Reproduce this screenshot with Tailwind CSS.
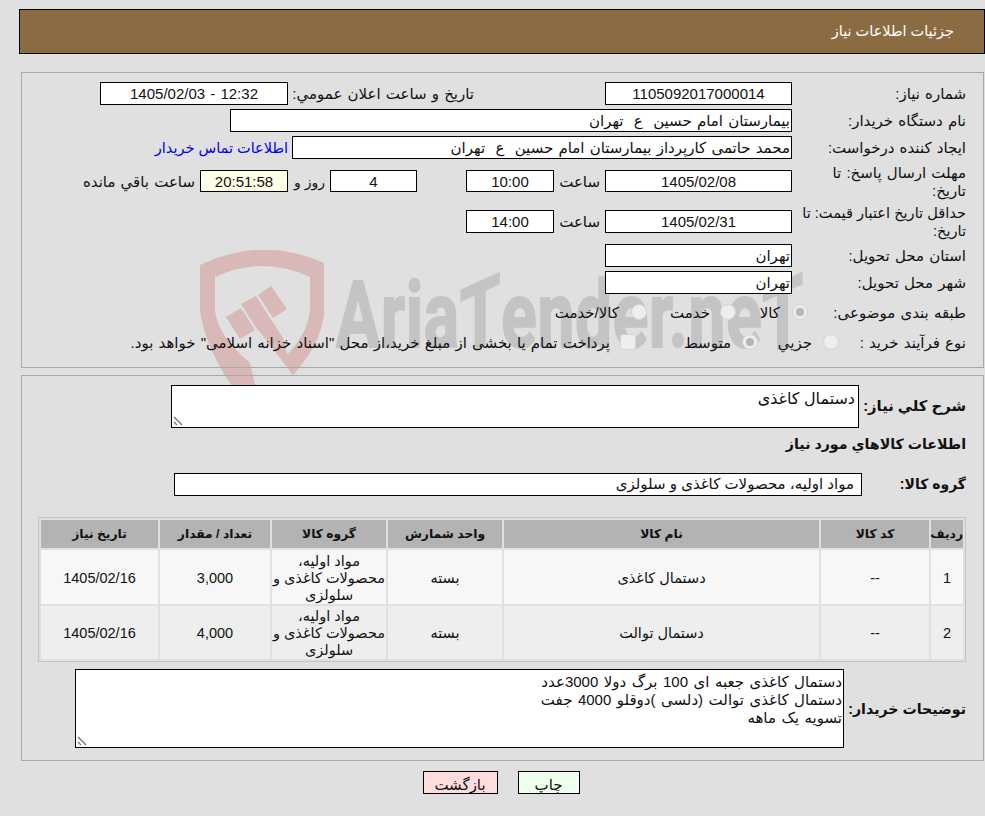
<!DOCTYPE html>
<html dir="rtl" lang="fa">
<head>
<meta charset="utf-8">
<title>جزئیات اطلاعات نیاز</title>
<script src="https://cdn.jsdelivr.net/npm/@tailwindcss/browser@4"></script>
</head>
<body class="bg-[#e0e0e0] text-[#111] text-[15px] [word-spacing:1px] font-['Liberation_Sans','DejaVu_Sans',sans-serif]">
<div class="relative w-[985px] h-[816px] overflow-hidden pt-[9px]">

  <!-- watermark -->
  <svg class="absolute left-[200px] top-[250px] w-[126px] h-[140px]" viewBox="200 250 126 140" aria-hidden="true">
    <path fill="#d9b8b8" fill-rule="evenodd" d="M200 265 Q262 235 324 263 L324 315 Q320 345 293 375 L268 338 L282 360 Q308 335 310 310 L310 277 Q262 255 215 277 L215 310 Q217 335 250 363 L256 388 L233 388 Q204 345 200 310 Z"/>
    <path fill="#d9b8b8" d="M226 317 L241 308 L255 330 L240 339 Z M241 304 L256 296 L270 318 L283 338 L293 375 L270 345 L255 326 Z M258 295 L271 286 L287 309 L273 318 Z"/>
  </svg>
  <div class="absolute left-[336px] top-[261px] text-[92px] leading-[110px] font-bold text-[#c4c4c4] [-webkit-text-stroke:2px_#c4c4c4] [word-spacing:0] whitespace-nowrap origin-left [direction:ltr] [transform:scaleX(.715)] font-['Roboto',sans-serif] tracking-[1px]" aria-hidden="true">Aria<span class="inline-block [transform:skewY(-18deg)]">T</span>ender.ne<span class="inline-block [transform:skewY(-18deg)]">T</span></div>

  <div class="relative">
    <header class="ml-[19px] mr-0 h-[45px] bg-[#8b6c42] border border-black flex items-center pr-[30px] text-white text-[14.5px] [word-spacing:0]">جزئیات اطلاعات نیاز</header>

    <!-- panel 1 -->
    <section class="mt-[18px] ml-[21px] mr-[1px] h-[296px] border border-[#a8a8a8] pr-[17px] pt-[9px]">
      <div class="flex items-center h-[23px]">
        <label class="w-[174px] pt-[2px]">شماره نیاز:</label>
        <div class="w-[187px] h-[23px] pt-[2px] border border-black bg-white flex items-center justify-center">1105092017000014</div>
        <label class="mr-[131px] w-[186px] pt-[2px]">تاريخ و ساعت اعلان عمومي:</label>
        <div class="w-[188px] h-[23px] pt-[2px] border border-black bg-white flex items-center justify-center">12:32 - 1405/02/03</div>
      </div>
      <div class="flex items-center h-[23px] mt-[4px]">
        <label class="w-[174px] pt-[2px]">نام دستگاه خريدار:</label>
        <div class="w-[562px] h-[23px] pt-[2px] border border-black bg-white flex items-center px-[1px]">بیمارستان امام حسین&nbsp; ع&nbsp; تهران</div>
      </div>
      <div class="flex items-center h-[23px] mt-[4px]">
        <label class="w-[174px] pt-[2px]">ایجاد کننده درخواست:</label>
        <div class="w-[500px] h-[23px] pt-[2px] border border-black bg-white flex items-center px-[1px]">محمد حاتمی کارپرداز بیمارستان امام حسین&nbsp; ع&nbsp; تهران</div>
        <a class="mr-[4px] pt-[2px] text-[#0000ee] text-[14.5px] [word-spacing:0]">اطلاعات تماس خریدار</a>
      </div>
      <div class="flex items-center h-[34px] mt-[5px]">
        <label class="w-[174px] pt-[2px] leading-[18px]">مهلت ارسال پاسخ: تا<br>تاریخ:</label>
        <div class="w-[187px] h-[22px] pt-[2px] border border-black bg-white flex items-center justify-center">1405/02/08</div>
        <span class="w-[51px] pr-[5px] pt-[2px]">ساعت</span>
        <div class="w-[88px] h-[22px] pt-[2px] border border-black bg-white flex items-center justify-center">10:00</div>
        <div class="w-[87px] h-[22px] pt-[2px] mr-[49px] border border-black bg-white flex items-center justify-center">4</div>
        <span class="w-[42px] pr-[5px] pt-[2px] text-[14px] [word-spacing:0]">روز و</span>
        <div class="w-[88px] h-[22px] pt-[2px] border border-black bg-[#ffffe8] flex items-center justify-center">20:51:58</div>
        <span class="pr-[5px] pt-[2px]">ساعت باقي مانده</span>
      </div>
      <div class="flex items-center h-[34px] mt-[6px]">
        <label class="w-[174px] pt-[2px] leading-[18px] text-[14.6px] [word-spacing:0]">حداقل تاریخ اعتبار قیمت: تا<br>تاریخ:</label>
        <div class="w-[187px] h-[23px] pt-[2px] border border-black bg-white flex items-center justify-center">1405/02/31</div>
        <span class="w-[51px] pr-[5px] pt-[2px]">ساعت</span>
        <div class="w-[88px] h-[23px] pt-[2px] border border-black bg-white flex items-center justify-center">14:00</div>
      </div>
      <div class="flex items-center h-[23px] mt-[6px]">
        <label class="w-[174px] pt-[2px]">استان محل تحویل:</label>
        <div class="w-[187px] h-[23px] pt-[2px] border border-black bg-white flex items-center px-[1px]">تهران</div>
      </div>
      <div class="flex items-center h-[23px] mt-[4px]">
        <label class="w-[174px] pt-[2px]">شهر محل تحویل:</label>
        <div class="w-[187px] h-[23px] pt-[2px] border border-black bg-white flex items-center px-[1px]">تهران</div>
      </div>
      <div class="flex items-center h-[22px] mt-[7px]">
        <label class="w-[158px] pt-[2px]">طبقه بندی موضوعی:</label>
        <span class="w-[16px] h-[16px] rounded-full bg-[#eeeeee] border border-[#d4d4d4] flex items-center justify-center"><span class="w-[8px] h-[8px] rounded-full bg-[#b5b5b5]"></span></span>
        <span class="w-[56px] pr-[12px] pt-[2px]">کالا</span>
        <span class="w-[16px] h-[16px] rounded-full bg-[#eeeeee] border border-[#d4d4d4]"></span>
        <span class="w-[73px] pr-[10px] pt-[2px]">خدمت</span>
        <span class="w-[16px] h-[16px] rounded-full bg-[#eeeeee] border border-[#d4d4d4]"></span>
        <span class="pr-[12px] pt-[2px]">کالا/خدمت</span>
      </div>
      <div class="flex items-center h-[22px] mt-[8px]">
        <label class="w-[127px] pt-[2px]">نوع فرآیند خرید :</label>
        <span class="w-[16px] h-[16px] rounded-full bg-[#eeeeee] border border-[#d4d4d4]"></span>
        <span class="w-[65px] pr-[11px] pt-[2px]">جزيي</span>
        <span class="w-[16px] h-[16px] rounded-full bg-[#eeeeee] border border-[#d4d4d4] flex items-center justify-center"><span class="w-[8px] h-[8px] rounded-full bg-[#b5b5b5]"></span></span>
        <span class="w-[106px] pr-[11px] pt-[2px]">متوسط</span>
        <span class="w-[16px] h-[16px] rounded-[3px] bg-[#eeeeee] border border-[#d4d4d4]"></span>
        <span class="pr-[10px] pt-[2px]">پرداخت تمام یا بخشی از مبلغ خرید،از محل "اسناد خزانه اسلامی" خواهد بود.</span>
      </div>
    </section>

    <!-- panel 2 -->
    <section class="mt-[7px] ml-[21px] mr-[1px] h-[386px] border border-[#a8a8a8] pr-[17px] pt-[9px] text-[14.5px] [word-spacing:0]">
      <div class="flex items-center h-[43px] font-bold">
        <label class="w-[107px] text-[14.8px]">شرح كلي نياز:</label>
        <div class="relative w-[688px] h-[43px] border border-black bg-white font-normal text-[16px] pr-[3px] pt-[1px]">دستمال کاغذی
          <svg class="absolute left-[1px] bottom-[1px] w-[10px] h-[10px]" viewBox="0 0 10 10"><path d="M1 1 L9 9 M1 6 L4 9" stroke="#777" stroke-width="1.4" fill="none"/></svg>
        </div>
      </div>
      <div class="font-bold text-[14.2px] h-[20px] mt-[7px] flex items-center">اطلاعات كالاهاي مورد نياز</div>
      <div class="flex items-center h-[23px] mt-[18px] font-bold">
        <label class="w-[104px] text-[14px]">گروه کالا:</label>
        <div class="w-[688px] h-[23px] border border-black bg-white font-normal text-[15px] flex items-center pr-[7px]">مواد اولیه، محصولات کاغذی و سلولزی</div>
      </div>
      <table class="mt-[21px] w-[928px] table-fixed border border-[#c4c4c4] border-separate border-spacing-[2px] text-center">
        <colgroup><col class="w-[32px]"><col class="w-[108px]"><col class="w-[315px]"><col class="w-[114px]"><col class="w-[114px]"><col class="w-[110px]"><col class="w-[117px]"></colgroup>
        <thead class="text-[12.3px] font-bold">
          <tr class="h-[28px] bg-[#b3b3b3]">
            <th>ردیف</th><th>کد کالا</th><th>نام کالا</th><th>واحد شمارش</th><th>گروه کالا</th><th>تعداد / مقدار</th><th>تاریخ نیاز</th>
          </tr>
        </thead>
        <tbody class="leading-[17px]">
          <tr class="h-[54px] bg-[#f7f7f7]">
            <td class="pt-[2px]">1</td><td class="pt-[2px]">--</td><td class="pt-[2px]">دستمال کاغذی</td><td class="pt-[2px]">بسته</td><td class="pt-[2px]">مواد اولیه، محصولات کاغذی و سلولزی</td><td class="pt-[2px]">3,000</td><td class="pt-[2px]">1405/02/16</td>
          </tr>
          <tr class="h-[53px] bg-[#eeeeee]">
            <td class="pt-[2px]">2</td><td class="pt-[2px]">--</td><td class="pt-[2px]">دستمال توالت</td><td class="pt-[2px]">بسته</td><td class="pt-[2px]">مواد اولیه، محصولات کاغذی و سلولزی</td><td class="pt-[2px]">4,000</td><td class="pt-[2px]">1405/02/16</td>
          </tr>
        </tbody>
      </table>
      <div class="flex items-center h-[79px] mt-[7px]">
        <label class="w-[122px] pt-[2px] font-bold text-[14.2px]">توضیحات خریدار:</label>
        <div class="relative w-[769px] h-[79px] border border-black bg-white pr-[1px] pt-[3px] text-[15px] [word-spacing:1.3px] leading-[18px]">
          <p>دستمال کاغذی جعبه ای 100 برگ دولا 3000عدد</p>
          <p>دستمال کاغذی توالت (دلسی )دوقلو 4000 جفت</p>
          <p>تسویه یک ماهه</p>
          <svg class="absolute left-[1px] bottom-[1px] w-[10px] h-[10px]" viewBox="0 0 10 10"><path d="M1 1 L9 9 M1 6 L4 9" stroke="#777" stroke-width="1.4" fill="none"/></svg>
        </div>
      </div>
    </section>

    <div class="flex justify-center gap-[20px] mt-[10px] pl-[17px]">
      <button class="w-[62px] h-[23px] pt-[2px] border border-black bg-[#eeffee]">چاپ</button>
      <button class="w-[75px] h-[23px] pt-[2px] border border-black bg-[#ffdddd]">بازگشت</button>
    </div>
  </div>
</div>
</body>
</html>
